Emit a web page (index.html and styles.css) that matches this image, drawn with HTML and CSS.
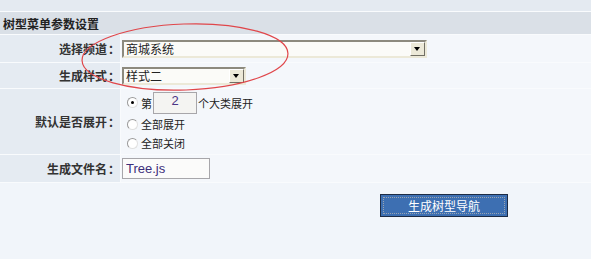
FILE: index.html
```html
<!DOCTYPE html>
<html lang="zh-CN">
<head>
  <meta charset="UTF-8">
  <title>树型菜单参数设置</title>
  <link rel="stylesheet" href="styles.css">
</head>
<body>
  <div class="page">
    <table class="form-table">
      <tr>
        <th colspan="2" class="title">树型菜单参数设置</th>
      </tr>
      <tr class="row-channel">
        <td class="label">选择频道<span class="colon">：</span></td>
        <td class="value">
          <div class="select wide">
            <span class="select-text">商城系统</span>
            <span class="select-btn"></span>
          </div>
        </td>
      </tr>
      <tr class="row-style">
        <td class="label">生成样式<span class="colon">：</span></td>
        <td class="value">
          <div class="select narrow">
            <span class="select-text">样式二</span>
            <span class="select-btn"></span>
          </div>
        </td>
      </tr>
      <tr class="row-expand">
        <td class="label">默认是否展开<span class="colon">：</span></td>
        <td class="value">
          <div class="opt"><span class="radio checked"></span>第<input class="num" type="text" value="2">个大类展开</div>
          <div class="opt"><span class="radio"></span>全部展开</div>
          <div class="opt"><span class="radio"></span>全部关闭</div>
        </td>
      </tr>
      <tr class="row-file">
        <td class="label">生成文件名<span class="colon">：</span></td>
        <td class="value"><input class="file" type="text" value="Tree.js"></td>
      </tr>
    </table>

    <div class="actions">
      <button class="make-btn"><span>生成树型导航</span></button>
    </div>

    <!-- 红圈标注 -->
    <svg class="mark" width="591" height="259" viewBox="0 0 591 259">
      <ellipse cx="185" cy="57" rx="103" ry="33" fill="none" stroke="#e0464a" stroke-width="1.2" transform="rotate(-2 185 57)"/>
    </svg>
  </div>
</body>
</html>
```

FILE: styles.css
```css
body {
  margin: 0;
  background: #f1f5fa;
  font-family: "Noto Sans CJK SC", sans-serif;
  font-size: 12px;
  color: #222;
}

.page {
  position: relative;
  width: 591px;
  height: 259px;
  padding-top: 11px;
  box-sizing: border-box;
  background: #f1f5fa;
}

.page::before {
  content: "";
  position: absolute;
  left: 0;
  top: 0;
  width: 100%;
  height: 11px;
  background: #e4eaf1;
}

.form-table {
  width: calc(100% + 2px);
  margin: 0 -1px;
  border-collapse: separate;
  border-spacing: 1px;
  background: #f9fbfd;
}

.title {
  height: 22px;
  padding: 0 3px;
  text-align: left;
  font-weight: bold;
  background: #dae0e7;
  color: #222;
}

.label {
  width: 120px;
  padding: 0;
  text-align: right;
  font-weight: bold;
  background: #e5ebf2;
  color: #333;
}

.colon {
  display: inline-block;
  padding-left: 1px;
}

.value {
  padding: 0 0 0 1px;
  background: #f4f7fb;
}

.row-channel td { height: 27px; }
.row-style td { height: 25px; }
.row-expand td { height: 65px; }
.row-file td { height: 27px; }

.select {
  display: flex;
  align-items: center;
  height: 18px;
  box-sizing: border-box;
  border: 2px solid #8d8a7e;
  border-right-color: #ece9d8;
  border-bottom-color: #ece9d8;
  background: #fbfbf8;
}

.select.wide { width: 305px; }
.select.narrow { width: 124px; }

.select-text {
  flex: 1;
  padding-left: 2px;
  font-size: 12px;
  line-height: 14px;
}

.select-btn {
  position: relative;
  width: 15px;
  height: 14px;
  box-sizing: border-box;
  border: 1px solid #fff;
  border-right-color: #716f64;
  border-bottom-color: #716f64;
  background: #ece9d8;
}

.select-btn::after {
  content: "";
  position: absolute;
  left: 3px;
  top: 4px;
  border-left: 3.5px solid transparent;
  border-right: 3.5px solid transparent;
  border-top: 4px solid #000;
}

.opt {
  display: flex;
  align-items: center;
  height: 19px;
  font-size: 11px;
  color: #222;
}

.opt:first-child {
  height: 24px;
}

.radio {
  width: 11px;
  height: 11px;
  box-sizing: border-box;
  margin: 0 3px 0 5px;
  border: 1px solid #9a9a9a;
  border-right-color: #e0e0e0;
  border-bottom-color: #e0e0e0;
  border-radius: 50%;
  background: #fff;
  position: relative;
}

.radio.checked::after {
  content: "";
  position: absolute;
  left: 3px;
  top: 3px;
  width: 3px;
  height: 3px;
  border-radius: 50%;
  background: #000;
}

.num {
  width: 44px;
  height: 22px;
  box-sizing: border-box;
  margin: 0 1px 0 1px;
  border: 1px solid #a7a6aa;
  background: #f4f4f2;
  text-align: center;
  font-family: "Liberation Sans", sans-serif;
  font-size: 13px;
  color: #4b3585;
  padding: 0 0 4px 0;
}

.file {
  width: 88px;
  height: 21px;
  box-sizing: border-box;
  border: 1px solid #a7a6aa;
  background: #fbfbfa;
  padding: 0 3px;
  font-family: "Liberation Sans", sans-serif;
  font-size: 13px;
  color: #3b2e7a;
}

.actions {
  display: flex;
  padding: 11px 0 0 380px;
}

.make-btn {
  width: 128px;
  height: 23px;
  padding: 2px;
  border: 1px solid #1d2c45;
  background: #3d6fb2;
  font-family: "Noto Sans CJK SC", sans-serif;
  font-size: 12px;
  color: #fff;
  cursor: pointer;
}

.make-btn span {
  display: flex;
  align-items: center;
  justify-content: center;
  height: 100%;
  border: 1px dotted #9aa4b0;
  box-sizing: border-box;
}

.mark {
  position: absolute;
  left: 0;
  top: 0;
  pointer-events: none;
}
```
